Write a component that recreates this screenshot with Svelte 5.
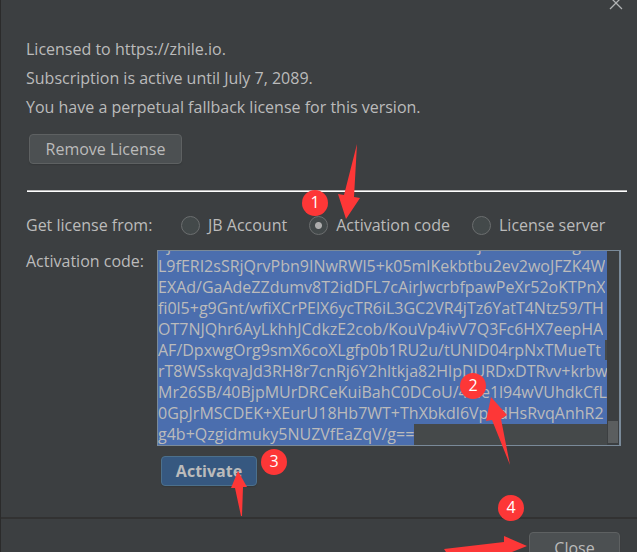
<script>
  import { onMount } from 'svelte';

  const lines = [
    'EjK2Ra4TnXbVw0Zu8CeHs3LdMk6fBo1iWNjU7hSvRt5AxgE9c',
    'L9fERI2sSRjQrvPbn9INwRWl5+k05mlKekbtbu2ev2woJFZK4W',
    'EXAd/GaAdeZZdumv8T2idDFL7cAirJwcrbfpawPeXr52oKTPnX',
    'fi0l5+g9Gnt/wfiXCrPElX6ycTR6iL3GC2VR4jTz6YatT4Ntz59/TH',
    'OT7NJQhr6AyLkhhJCdkzE2cob/KouVp4ivV7Q3Fc6HX7eepHA',
    'AF/DpxwgOrg9smX6coXLgfp0b1RU2u/tUNID04rpNxTMueTt',
    'rT8WSskqvaJd3RH8r7cnRj6Y2hltkja82HlpDURDxDTRvv+krbw',
    'Mr26SB/40BjpMUrDRCeKuiBahC0DCoU/4+le1l94wVUhdkCfL',
    '0GpJrMSCDEK+XEurU18Hb7WT+ThXbkdl6VpodHsRvqAnhR2',
    'g4b+Qzgidmuky5NUZVfEaZqV/g=='
  ];

  let source = $state('code');
  let code = $state(lines.join('\n'));
  let field;

  const options = [
    { value: 'account', label: 'JB Account' },
    { value: 'code', label: 'Activation code' },
    { value: 'server', label: 'License server' }
  ];

  const steps = [
    { n: 1, x: 302, y: 190 },
    { n: 2, x: 460, y: 373 },
    { n: 3, x: 261, y: 449 },
    { n: 4, x: 498, y: 495 }
  ];

  onMount(() => {
    field.focus({ preventScroll: true });
    field.select();
    field.scrollTop = field.scrollHeight;
  });
</script>

<main class="dialog">
  <button class="dismiss" aria-label="Close window">
    <svg width="14" height="14" viewBox="0 0 14 14"><path d="M1 1 13 13M13 1 1 13" /></svg>
  </button>

  <section class="content">
    <div class="info">
      <p>Licensed to https://zhile.io.</p>
      <p>Subscription is active until July 7, 2089.</p>
      <p>You have a perpetual fallback license for this version.</p>
    </div>
    <button class="btn remove">Remove License</button>
    <hr />

    <div class="row sources" role="radiogroup" aria-labelledby="source-label">
      <span class="name" id="source-label">Get license from:</span>
      {#each options as option}
        <label class="option">
          <input type="radio" name="source" value={option.value} bind:group={source} />
          {option.label}
        </label>
      {/each}
    </div>

    <div class="row">
      <label class="name" for="code">Activation code:</label>
      <div class="field">
        <textarea id="code" bind:this={field} bind:value={code} spellcheck="false"></textarea>
        <div class="track"><div class="thumb"></div></div>
      </div>
    </div>
    <button class="btn activate">Activate</button>
  </section>

  <footer>
    <button class="btn close">Close</button>
  </footer>

  <div class="notes" aria-hidden="true">
    <svg width="637" height="552" viewBox="0 0 637 552">
      <path d="M357 144 354 197 360 198 346 219 338 194 344 195Z" />
      <path d="M491 397 507 415 501 419 510 465 492 420 486 421Z" />
      <path d="M238 471 247 487 243 487 242 516 241 516 235 488 231 488Z" />
      <path d="M444 549 504 542 504 536 527 546 512 552 446 552Z" />
    </svg>
    {#each steps as step}
      <span class="badge" style="left: {step.x}px; top: {step.y}px">{step.n}</span>
    {/each}
  </div>
</main>

<style>
  :global(body) {
    background: #3c3f41;
  }

  .dialog {
    position: relative;
    box-sizing: border-box;
    height: 100vh;
    overflow: hidden;
    border-left: 1px solid #2b2b2b;
    background: #3c3f41;
    color: #bbbbbb;
    font: 16px/22px 'Open Sans', 'Noto Sans', sans-serif;
  }

  .dismiss {
    position: absolute;
    top: -4px;
    right: 14px;
    display: flex;
    padding: 0;
    border: 0;
    background: none;
  }

  .dismiss path {
    fill: none;
    stroke: #b0b2b3;
    stroke-width: 1.3;
  }

  .content {
    display: flex;
    flex-direction: column;
    align-items: flex-start;
    padding: 35px 10px 31px 25px;
  }

  p {
    margin: 0;
    line-height: 29px;
  }

  .btn {
    box-sizing: border-box;
    height: 30px;
    padding: 0;
    border: 1px solid #5e6162;
    border-radius: 4px;
    background: #4c5052;
    box-shadow: 0 1px 1px #35383a;
    color: #bbbbbb;
    font: inherit;
    line-height: 28px;
  }

  .remove {
    width: 153px;
    margin: 12px 0 0 3px;
  }

  hr {
    align-self: stretch;
    margin: 26px 0 22px 1px;
    height: 1px;
    border: 0;
    border-top: 1px solid #b8b8b8;
    background: #ffffff;
  }

  .row {
    display: flex;
    align-self: stretch;
    padding-right: 6px;
  }

  .sources {
    align-items: center;
    padding-bottom: 14px;
  }

  .name {
    flex: none;
    width: 131px;
    white-space: nowrap;
  }

  .sources .name {
    width: 155px;
  }

  .option {
    display: flex;
    align-items: center;
    gap: 8px;
    margin-right: 22px;
    white-space: nowrap;
  }

  input {
    appearance: none;
    box-sizing: border-box;
    width: 19px;
    height: 19px;
    margin: 0;
    border: 1px solid #6b6e6f;
    border-radius: 50%;
    background: #43494a;
  }

  input:checked {
    background: radial-gradient(circle, #adadad 3px, #43494a 4px);
  }

  .field {
    display: flex;
    flex: 1;
    box-sizing: border-box;
    height: 196px;
    border: 1px solid #7a8a99;
    border-right-width: 2px;
    background: #45494a;
  }

  textarea {
    flex: 1;
    min-width: 0;
    box-sizing: border-box;
    padding: 0;
    border: 0;
    outline: 0;
    resize: none;
    overflow-y: scroll;
    scrollbar-width: none;
    background: transparent;
    color: #bbbbbb;
    caret-color: transparent;
    font: inherit;
    line-height: 21px;
    white-space: pre;
  }

  textarea::selection {
    background: rgba(75, 110, 175, 0.99);
    color: #bbbbbb;
  }

  .track {
    display: flex;
    flex-direction: column;
    justify-content: flex-end;
    padding: 2px 1px;
    background: #3c3f41;
  }

  .thumb {
    width: 10px;
    height: 22px;
    background: #5b5e5f;
  }

  .activate {
    width: 96px;
    margin: 10px 0 0 135px;
    border-color: #4c708c;
    background: #365880;
    font-weight: 700;
  }

  footer {
    display: flex;
    justify-content: flex-end;
    padding: 13px 17px;
    border-top: 2px solid #323232;
  }

  .close {
    width: 91px;
    height: 32px;
  }

  .notes {
    position: absolute;
    inset: 0 0 0 -1px;
    pointer-events: none;
  }

  .notes path {
    fill: #fd3737;
  }

  .badge {
    position: absolute;
    width: 26px;
    height: 26px;
    border-radius: 50%;
    background: #fd3737;
    color: #ffffff;
    line-height: 24px;
    text-align: center;
  }
</style>
